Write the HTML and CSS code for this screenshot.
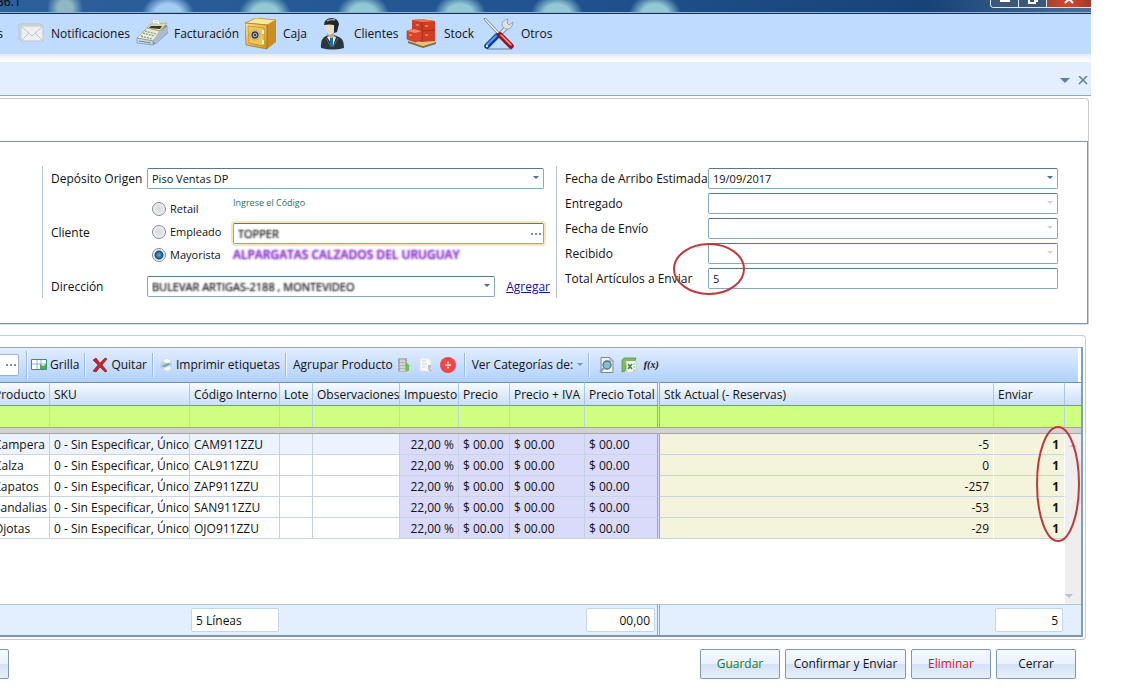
FILE: index.html
```html
<!DOCTYPE html>
<html lang="es">
<head>
<meta charset="utf-8">
<title>Envío de artículos</title>
<link rel="stylesheet" href="styles.css">
</head>
<body>
<div class="app">
  <header class="titlebar">
    <span class="title">36.1</span>
    <div class="window-buttons">
      <button class="win" aria-label="Minimizar"><svg width="12" height="4"><path d="M1 0h10v2H1z" fill="#fff"/></svg></button>
      <button class="win" aria-label="Restaurar"><svg width="12" height="4"><path d="M2 0v3h6V0M8 1h2V0" fill="none" stroke="#fff" stroke-width="2"/></svg></button>
      <button class="win win-close" aria-label="Cerrar ventana"><svg width="12" height="4"><path d="M2 3l3-3h2l3 3" fill="none" stroke="#fff" stroke-width="2"/></svg></button>
    </div>
  </header>

  <nav class="menubar">
    <a class="menu-item first" href="#">s</a>
    <a class="menu-item" href="#"><svg width="32" height="32" viewBox="0 0 32 32"><path d="M6 6h22v15H6z" fill="#d5dce3" stroke="#b8c2cc"/><path d="M8 8h22v15H8z" fill="#eef0f2" stroke="#c2c8ce"/><path d="M8 8l11 10L30 8M8 23l8-8M30 23l-8-8" fill="none" stroke="#bcc3ca"/></svg><span>Notificaciones</span></a>
    <a class="menu-item" href="#"><svg width="32" height="32" viewBox="0 0 32 32"><path d="M1 21L12 9l8-1 11-1 1 8-12 11-5 1z" fill="#7e92a4"/><path d="M1 20l10-10 13 3-7 10z" fill="#eeebdc" stroke="#9a9a8d" stroke-width=".6"/><path d="M17 23l7-10 8-5v6L20 26z" fill="#a9bccb"/><path d="M1 20l16 3v4L1 25z" fill="#c7d9e6" stroke="#6f8799" stroke-width=".6"/><path d="M11 10l4-4 16-1-7 8z" fill="#e3dba6" stroke="#999574" stroke-width=".6"/><path d="M15 8l11 0-2 3-11-1z" fill="#353b2a"/><path d="M16 1l7 1 1 5-7-1z" fill="#fff" stroke="#adb8c4" stroke-width=".6"/><path d="M18 3l4 1M18 5l4 1" stroke="#abb3bd" stroke-width=".7"/><path d="M9 13l11 3M7 15l11 3M5 18l11 3" stroke="#8c9d79" stroke-width="1.3" stroke-dasharray="2 1"/><path d="M3 23l12 2" stroke="#728a9c"/></svg><span>Facturación</span></a>
    <a class="menu-item" href="#"><svg width="32" height="32" viewBox="0 0 32 32"><defs><linearGradient id="gold" x2="1" y2="1"><stop stop-color="#ffe28a"/><stop offset="1" stop-color="#cf9224"/></linearGradient></defs><path d="M0 5l11-5 20 2-9 5z" fill="#ffe69a" stroke="#b4832b" stroke-width=".7"/><path d="M22 7l9-5v22l-9 7z" fill="#c98d22"/><path d="M0 5l22 2v24L1 27z" fill="url(#gold)" stroke="#94640d" stroke-width=".6"/><path d="M3 8l16 2v18L4 25z" fill="#f1c654" stroke="#b98a2c" stroke-width=".7"/><circle cx="10" cy="17" r="5" fill="#e9e2c8" stroke="#a5905c" stroke-width=".7"/><circle cx="10" cy="17" r="3" fill="#9faab0" stroke="#33383b" stroke-width="1.3"/><circle cx="10" cy="17" r="1" fill="#222"/><path d="M18 12v4M18 22v4" stroke="#fff4bd" stroke-width="2"/></svg><span>Caja</span></a>
    <a class="menu-item" href="#"><svg width="32" height="32" viewBox="0 0 32 32"><path d="M5 30q-1-9 5-12l5-2 8 3q5 2 5 11-11 3-23 0z" fill="#2b353e"/><path d="M11 19l4-2 5 2-3 9z" fill="#e8eef2"/><path d="M14 20l2-1 1 1v7l-1 3-2-4z" fill="#1873a2"/><path d="M11 13l7 1v5l-3 1-4-3z" fill="#bfa78d"/><path d="M9 5q5-3 9 0v9q-3 4-6 2-3-3-3-11z" fill="#e7dcc8"/><path d="M8 7Q8 1 15 0q7 0 8 6l-2 8-3 1V7q-5-1-10 0z" fill="#1f262c"/><path d="M11 3q4-2 8-1" stroke="#9eabb5" stroke-width="1.4" fill="none"/><path d="M10 20l5 9M22 20l-5 9" stroke="#677b89" stroke-width=".7"/></svg><span>Clientes</span></a>
    <a class="menu-item" href="#"><svg width="32" height="32" viewBox="0 0 32 32"><path d="M2 23l15 5 13-4v2l-13 4-15-5z" fill="#8b6a30"/><path d="M2 22l15-3 13 4-13 5z" fill="#e3c37c"/><path d="M6 2l9-1 14 2v20l-13 1-10-2z" fill="#cf3d24"/><path d="M6 2l9-1 14 2-13 1z" fill="#f07952"/><path d="M16 4v19M16 13l13-1M6 12l10 1" stroke="#962a1b" stroke-width=".8" fill="none"/><path d="M1 13l7-2 8 2v9l-7 2-8-3z" fill="#da4526" stroke="#9d3422" stroke-width=".6"/><path d="M1 13l7-2 8 2-7 2z" fill="#f38a60"/><path d="M10 7h3M19 8h3M19 17h3M3 17h3" stroke="#f7b18c"/></svg><span>Stock</span></a>
    <a class="menu-item" href="#"><svg width="32" height="32" viewBox="0 0 32 32"><path d="M4 31h25" stroke="#899db4" stroke-width="1.5"/><path d="M2 1l15 16" stroke="#77828d" stroke-width="2.6" stroke-linecap="round"/><path d="M2 1l15 16" stroke="#f5f6f7" stroke-width="1.3"/><path d="M17 16l7-7" stroke="#707982" stroke-width="4"/><path d="M17 16l7-7" stroke="#e0e3e5" stroke-width="2.6"/><path d="M25 1q-6 1-6 6 2 5 7 4 4-2 4-7l-4 3-2-2z" fill="#dce1e5" stroke="#838d96" stroke-width=".7"/><path d="M4 28l10-10" stroke="#123d91" stroke-width="5.5" stroke-linecap="round"/><path d="M4 27l9-9" stroke="#539bec" stroke-width="2" stroke-linecap="round"/><path d="M17 17l11 11" stroke="#99121d" stroke-width="5.5" stroke-linecap="round"/><path d="M18 17l10 10" stroke="#f29497" stroke-width="1.6" stroke-linecap="round"/><circle cx="4" cy="28" r="1.2" fill="#d6e8fb"/></svg><span>Otros</span></a>
  </nav>
  <div class="ribbon-edge"></div>
  <div class="tabstrip">
    <button class="plain" aria-label="Lista de pestañas"><svg width="10" height="6"><path d="M0 0h10L5 5z" fill="#5d7fa6"/></svg></button>
    <button class="plain" aria-label="Cerrar pestaña"><svg width="10" height="9"><path d="M1 0l8 8M9 0L1 8" stroke="#6482a3" stroke-width="1.6"/></svg></button>
  </div>

  <main>
    <section class="document">
      <form class="form">
        <div class="group origin">
          <label for="deposito">Depósito Origen</label>
          <div class="combo"><select id="deposito"><option>Piso Ventas DP</option></select></div>

          <span id="cliente-label">Cliente</span>
          <div class="client">
            <div class="radios" role="radiogroup" aria-labelledby="cliente-label">
              <label><input type="radio" name="tipo">Retail</label>
              <label><input type="radio" name="tipo">Empleado</label>
              <label><input type="radio" name="tipo" checked>Mayorista</label>
            </div>
            <div class="code">
              <label class="hint" for="codigo">Ingrese el Código</label>
              <div class="code-box"><input id="codigo" class="masked" value="TOPPER"><button type="button" class="dots" aria-label="Buscar cliente"><i></i><i></i><i></i></button></div>
              <output class="client-name">ALPARGATAS CALZADOS DEL URUGUAY</output>
            </div>
          </div>

          <label for="direccion">Dirección</label>
          <div class="address"><div class="combo"><select id="direccion" class="masked"><option>BULEVAR ARTIGAS-2188 , MONTEVIDEO</option></select></div><a href="#">Agregar</a></div>
        </div>

        <div class="group shipping">
          <label for="arribo">Fecha de Arribo Estimada</label>
          <div class="combo"><select id="arribo"><option>19/09/2017</option></select></div>
          <label for="entregado">Entregado</label>
          <div class="combo off"><select id="entregado" disabled><option></option></select></div>
          <label for="envio">Fecha de Envío</label>
          <div class="combo off"><select id="envio" disabled><option></option></select></div>
          <label for="recibido">Recibido</label>
          <div class="combo off"><select id="recibido" disabled><option></option></select></div>
          <label for="total">Total Artículos a Enviar</label>
          <input id="total" class="field" value="5">
          <svg class="mark mark-total" width="74" height="54"><ellipse cx="37" cy="27" rx="35" ry="25"/></svg>
        </div>
      </form>
    </section>

    <section class="items">
      <div class="grid">
        <div class="toolbar">
          <div class="search"><button class="dots" aria-label="Buscar producto"><i></i><i></i><i></i></button></div>
          <span class="sep tall"></span>
          <button class="tool grilla"><svg width="16" height="12"><path d="M.5.5h15v10H.5z" fill="#fff" stroke="#25958a"/><path d="M1 5h14M6 1v9M10 1v9" stroke="#8fb6de"/><path d="M9 5l3 2 3-2v5H9z" fill="#5ea944"/></svg>Grilla</button>
          <span class="sep"></span>
          <button class="tool quitar"><svg width="16" height="16"><path d="M1 3l3-2 4 5 5-5 2 1-5 6 5 6-2 1-5-5-4 5-3-1 5-6z" fill="#c9242b" stroke="#7d1118" stroke-width=".6"/></svg>Quitar</button>
          <span class="sep"></span>
          <button class="tool imprimir"><svg width="12" height="14"><path d="M0 6l3-3h6l3 3v5l-4 2-8-3z" fill="#c5d0db"/><path d="M3 4l3-4 5 2-2 4z" fill="#fff" stroke="#c1ccd7" stroke-width=".5"/><path d="M1 8l7-3 3 1-6 3z" fill="#6ba6d4"/><path d="M3 11l6-3 3 2-4 3z" fill="#f5f6f8"/></svg>Imprimir etiquetas</button>
          <span class="sep"></span>
          <button class="tool agrupar">Agrupar Producto</button>
          <button class="tool icon" aria-label="Expandir"><svg width="16" height="16"><path d="M2 1h9v14H2z" fill="#b4b7b9"/><path d="M3 2v12M10 2v12" stroke="#8f9496" stroke-dasharray="2 1"/><path d="M4 4h5M4 7h5M4 10h5M4 13h5" stroke="#edf0f1"/><path d="M11 6l3 3h-1v5h-3V9H9z" fill="#6dc53d"/></svg></button>
          <button class="tool icon" aria-label="Nota"><svg width="16" height="16"><path d="M2 1h8l3 3v10H2z" fill="#f7f8f8" stroke="#dbe0e5" stroke-width=".7"/><path d="M4 4h4M4 7h5M4 10h4" stroke="#d3d7da"/><path d="M10 8h3v3h-1l2 3-2 1-2-3z" fill="#b9c2c7"/></svg></button>
          <button class="tool icon" aria-label="Dividir"><svg width="16" height="16"><circle cx="8" cy="8" r="8" fill="#f24546"/><path d="M5 8h6" stroke="#fff" stroke-width="1.3"/><circle cx="8" cy="5.5" r="1" fill="#fff"/><circle cx="8" cy="10.5" r="1" fill="#fff"/></svg></button>
          <span class="sep"></span>
          <button class="tool categorias">Ver Categorías de:<svg width="6" height="4"><path d="M0 0h6L3 3z" fill="#7393b9"/></svg></button>
          <span class="sep"></span>
          <button class="tool icon" aria-label="Vista previa"><svg width="16" height="16"><path d="M2 .5h9l3 3v12H2z" fill="#f0f3f5" stroke="#7d8992"/><path d="M11 1v3h3" fill="none" stroke="#8b969e"/><circle cx="8" cy="8" r="4" fill="#83bfd2" stroke="#526f7c" stroke-width="1.3"/><path d="M5 11l-4 4" stroke="#7b9fc0" stroke-width="2"/></svg></button>
          <button class="tool icon" aria-label="Exportar a Excel"><svg width="16" height="16"><path d="M3 1h12l-1 3H6L4 14l-3 1V3z" fill="#7fbd5f" stroke="#4f8f3d" stroke-width=".7"/><path d="M5 4h10v10l-9 2z" fill="#fff" stroke="#a7c39e" stroke-width=".6"/><path d="M7 7l4 5M11 7l-4 5" stroke="#438e3b" stroke-width="1.8"/><path d="M13 6v8" stroke="#75b66a" stroke-dasharray="2 1"/></svg></button>
          <button class="tool icon fx" aria-label="Fórmula">f(x)</button>
        </div>

        <table>
          <colgroup><col class="c-prod"><col class="c-sku"><col class="c-cod"><col class="c-lote"><col class="c-obs"><col class="c-imp"><col class="c-pre"><col class="c-iva"><col class="c-tot"><col><col class="c-env"><col class="c-scr"></colgroup>
          <thead>
            <tr class="head"><th>Producto</th><th>SKU</th><th>Código Interno</th><th>Lote</th><th>Observaciones</th><th>Impuesto</th><th>Precio</th><th>Precio + IVA</th><th>Precio Total</th><th>Stk Actual (- Reservas)</th><th>Enviar</th><th></th></tr>
            <tr class="filter"><td></td><td></td><td></td><td></td><td></td><td></td><td></td><td></td><td></td><td></td><td></td><td></td></tr>
            <tr class="split"><td colspan="12"></td></tr>
          </thead>
          <tbody>
            <tr class="row current"><td>Campera</td><td>0 - Sin Especificar, Único</td><td>CAM911ZZU</td><td></td><td></td><td>22,00 %</td><td>$ 00.00</td><td>$ 00.00</td><td>$ 00.00</td><td>-5</td><td>1</td><td class="bar"><svg width="8" height="5"><path d="M0 5l4-4 4 4z" fill="#c5c8cf"/></svg></td></tr>
            <tr class="row"><td>Calza</td><td>0 - Sin Especificar, Único</td><td>CAL911ZZU</td><td></td><td></td><td>22,00 %</td><td>$ 00.00</td><td>$ 00.00</td><td>$ 00.00</td><td>0</td><td>1</td><td class="bar"></td></tr>
            <tr class="row"><td>Zapatos</td><td>0 - Sin Especificar, Único</td><td>ZAP911ZZU</td><td></td><td></td><td>22,00 %</td><td>$ 00.00</td><td>$ 00.00</td><td>$ 00.00</td><td>-257</td><td>1</td><td class="bar"></td></tr>
            <tr class="row"><td>Sandalias</td><td>0 - Sin Especificar, Único</td><td>SAN911ZZU</td><td></td><td></td><td>22,00 %</td><td>$ 00.00</td><td>$ 00.00</td><td>$ 00.00</td><td>-53</td><td>1</td><td class="bar"></td></tr>
            <tr class="row"><td>Ojotas</td><td>0 - Sin Especificar, Único</td><td>OJO911ZZU</td><td></td><td></td><td>22,00 %</td><td>$ 00.00</td><td>$ 00.00</td><td>$ 00.00</td><td>-29</td><td>1</td><td class="bar"></td></tr>
            <tr class="rest"><td colspan="11"></td><td class="bar"><svg width="8" height="5"><path d="M0 0h8L4 4z" fill="#bcc0c8"/></svg></td></tr>
          </tbody>
          <tfoot>
            <tr><td></td><td></td><td><output class="sum">5 Líneas</output></td><td></td><td></td><td></td><td></td><td></td><td class="pair"><output class="sum right">00,00</output></td><td></td><td><output class="sum right">5</output></td><td></td></tr>
          </tfoot>
        </table>
        <svg class="mark mark-send" width="46" height="118"><ellipse cx="23" cy="59" rx="21" ry="57"/></svg>
      </div>
    </section>

    <div class="actions">
      <button class="btn cut" aria-label="Anterior"></button>
      <button class="btn save">Guardar</button>
      <button class="btn confirm">Confirmar y Enviar</button>
      <button class="btn delete">Eliminar</button>
      <button class="btn">Cerrar</button>
    </div>
  </main>
</div>
</body>
</html>
```
FILE: styles.css
```css
* { box-sizing: border-box; }

body {
  margin: 0;
  background: #fff;
  color: #111;
  font: 12px/16px "Open Sans", "Noto Sans", sans-serif;
}

button, input, select { font: inherit; color: inherit; margin: 0; }
button { padding: 0; }
svg { display: block; flex: none; }

.app { margin-right: 40px; overflow: hidden; }

/* Window frame */
.titlebar {
  display: flex;
  justify-content: space-between;
  height: 14px;
  overflow: hidden;
  border-bottom: 1px solid #14304f;
  box-shadow: inset 0 -1px #8fb3d6;
  background:
    radial-gradient(ellipse 18px 18px at 65px 8px, #8fb8c4 40%, transparent),
    radial-gradient(ellipse 26px 20px at 168px 14px, #a3cdf0 50%, transparent),
    radial-gradient(ellipse 26px 20px at 265px 14px, #93c8d4 50%, transparent),
    radial-gradient(ellipse 26px 20px at 363px 14px, #93c8d4 50%, transparent),
    radial-gradient(ellipse 26px 20px at 460px 14px, #93c8d4 50%, transparent),
    radial-gradient(ellipse 26px 20px at 557px 14px, #93c8d4 50%, transparent),
    radial-gradient(ellipse 26px 20px at 655px 14px, #93c8d4 50%, transparent),
    linear-gradient(90deg, #2d619c, #1f5491 50%, #184377 85%, #4a6f97);
}
.title { margin-left: -3px; line-height: 4px; color: #000; }
.window-buttons {
  display: flex;
  height: 8px;
  border: 1px solid #dbe7f2;
  border-width: 0 0 1px 1px;
  border-radius: 0 0 0 4px;
  overflow: hidden;
}
.win {
  display: flex;
  justify-content: center;
  width: 28px;
  border: 0;
  border-right: 1px solid #dbe7f2;
  background: #3d5778;
}
.win-close { width: 44px; border-right: 0; background: linear-gradient(90deg, #a8412c, #d8452a, #9c3a26); }

.menubar {
  display: grid;
  grid-template-columns: 3px 113px 99px 61px 80px 67px 80px;
  gap: 10px;
  align-items: center;
  height: 40px;
  background: #bfdbff;
}
.menu-item { display: flex; align-items: center; gap: 6px; color: #111; text-decoration: none; white-space: nowrap; }
.menu-item.first { justify-content: flex-end; }
.ribbon-edge { height: 8px; background: linear-gradient(#e6eaf0, #fff); }
.tabstrip {
  display: flex;
  align-items: center;
  justify-content: flex-end;
  gap: 8px;
  height: 34px;
  padding: 4px 3px 0 0;
  border-bottom: 1px solid #8ba9c6;
  background: #e3efff;
}
.plain { border: 0; background: none; }

/* Form */
.document {
  margin: 2px 2px 0 0;
  padding-top: 42px;
  border: 1px solid #c9cdd1;
  border-width: 1px 1px 0 0;
  border-radius: 0 4px 0 0;
}
.form {
  display: flex;
  align-items: flex-start;
  padding: 24px 29px 25px 42px;
  border: 1px solid #7f97a9;
  border-left: 0;
  box-shadow: 0 1px #d9e0e6;
}
.group { display: grid; align-items: center; padding: 2px 0 0 8px; border-left: 1px solid #b5c5d2; white-space: nowrap; }
.origin { flex: none; grid-template: 21px 87px 21px / 96px 397px; width: 514px; height: 132px; }
.shipping {
  position: relative;
  flex: 1;
  grid-template-columns: 143px 1fr;
  grid-auto-rows: 21px;
  row-gap: 4px;
  height: 132px;
}
.combo, .code-box, .field {
  border: 1px solid #86a9bd;
  border-top-color: #58788d;
  border-radius: 2px;
  background: #fff;
}
.combo { position: relative; flex: 1; height: 21px; }
.combo::after {
  content: "";
  position: absolute;
  top: 7px;
  right: 4px;
  border: 3px solid transparent;
  border-top-color: #41719c;
  border-bottom: 0;
}
.combo.off::after { border-top-color: #cdd7df; }
.combo select {
  display: block;
  width: 100%;
  height: 19px;
  padding: 0 16px 0 4px;
  border: 0;
  background: none;
  appearance: none;
  font-size: 11px;
}
.field { width: 100%; height: 21px; padding: 0 4px; font-size: 11px; }

.client { display: flex; justify-content: space-between; height: 71px; }
.radios { display: grid; grid-auto-rows: 23px; margin-left: 5px; align-content: start; }
.radios label { display: flex; align-items: center; gap: 4px; font-size: 11px; }
.radios input {
  width: 14px;
  height: 14px;
  border: 1px solid #858b91;
  border-radius: 50%;
  appearance: none;
  background: radial-gradient(#d4d7db, #e9ebed 60%, #f8f8f8);
}
.radios input:checked { background: radial-gradient(circle at 50% 50%, #63b4df, #144e78 4px, #f1f4f6 5px); }
.code { display: flex; flex-direction: column; width: 311px; }
.hint { color: #1c7267; font-size: 9px; line-height: 12px; }
.code-box {
  display: flex;
  flex: none;
  align-items: center;
  height: 21px;
  margin-top: 14px;
  box-shadow: 0 0 0 2px #f5e9b8;
}
.code-box input { flex: 1; width: 0; border: 0; outline: 0; padding: 0 4px; background: none; font-size: 11px; }
.dots { display: flex; gap: 2px; padding: 0 2px; border: 0; background: none; }
.dots i { width: 2px; height: 2px; background: #7592ad; }
.masked { color: transparent; text-shadow: 0 0 2px #333, 0 0 2px #777; }
.client-name {
  margin-top: 3px;
  color: transparent;
  text-shadow: 0 0 2px #8a35cc, 0 0 3px #b98ae0;
  font-weight: 600;
}
.address { display: flex; align-items: center; gap: 11px; margin-right: -6px; }
.address a { color: #1414a0; }

/* Items grid */
.items {
  margin: 11px 5px 0 0;
  padding: 11px 2px 2px 0;
  border: 1px solid #c3ced5;
  border-left: 0;
  border-radius: 0 4px 4px 0;
}
.grid {
  position: relative;
  margin-left: -10px;
  border-top: 1px solid #9aa9b5;
  border-right: 2px solid #7f9dbd;
  border-bottom: 2px solid #7f93ae;
}
.toolbar {
  display: flex;
  align-items: center;
  height: 34px;
  margin-right: 3px;
  background: linear-gradient(#e1edff, #c5dcff 60%, #afd0fc);
}
.search {
  display: flex;
  align-items: center;
  justify-content: flex-end;
  width: 29px;
  height: 22px;
  border: 1px solid #9cb6ce;
  border-radius: 2px;
  background: #fff;
}
.sep { width: 2px; height: 24px; margin: 0 6px 0 5px; border-left: 1px solid #9abbdd; border-right: 1px solid #f0f6ff; }
.sep.tall { height: 28px; margin: 0 3px 0 7px; }
.tool { display: flex; align-items: center; gap: 3px; border: 0; background: none; white-space: nowrap; }
.tool.icon { width: 22px; justify-content: center; }
.imprimir, .categorias { gap: 4px; }
.tool.fx { font: italic bold 10px/16px "Liberation Serif", serif; }

table { width: 100%; table-layout: fixed; border-collapse: separate; border-spacing: 0; }
.c-prod { width: 60px; }
.c-sku { width: 140px; }
.c-cod { width: 90px; }
.c-lote { width: 33px; }
.c-obs { width: 87px; }
.c-imp { width: 59px; }
.c-pre { width: 51px; }
.c-iva { width: 75px; }
.c-tot { width: 75px; }
.c-env { width: 71px; }
.c-scr { width: 16px; }
th, td { padding: 2px 4px 0; text-align: left; font-weight: 400; white-space: nowrap; border-right: 1px solid #c2d3e0; }
tr > :last-child { border-right: 0; }
.head th {
  height: 24px;
  border-top: 1px solid #6990bd;
  border-bottom: 1px solid #6c94bd;
  border-right-color: #a9c8e4;
  background: linear-gradient(#f7fbff, #dbe9fc 60%, #cbdff9);
}
.filter td { height: 21px; background: #ceff80; }
.split td { height: 7px; padding: 0; border: 1px solid #a3a3a3; border-width: 1px 0; background: #d2d2d2; }
.row td { height: 21px; border-bottom: 1px solid #c5d5e2; }
.row.current td { background: #ecf3ff; }
.row td:nth-child(n+6) { background: #dadafa; }
.row.current td:nth-child(n+6) { background: #dadafa; }
.row td:nth-child(n+10), .row.current td:nth-child(n+10) { background: #f4f4dc; border-right-color: #fff; text-align: right; }
.row td:nth-child(6) { text-align: right; }
.row td:nth-child(11) { font-weight: 700; padding-right: 5px; }
.head th:nth-child(9), .filter td:nth-child(9), .row td:nth-child(9), tfoot td.pair { border-right: 3px double #86aad0; }
.row td.bar.bar.bar, td.bar { padding: 0 4px; border: 0; background: #eee; }
.rest td { height: 65px; padding: 0; border: 0; vertical-align: bottom; }
.rest td.bar { padding-bottom: 5px; }
tfoot td { height: 31px; padding: 0 1px; border: 0; border-top: 1px solid #a9c6e0; background: #e3efff; }
.sum { display: block; height: 24px; padding: 0 4px; border: 1px solid #c4d6ea; border-radius: 2px; background: #fff; line-height: 23px; }
.sum.right { text-align: right; margin-right: 1px; }

.mark { position: absolute; fill: none; stroke: #c3373a; stroke-width: 2; pointer-events: none; }
.mark-total { left: 115px; top: 76px; }
.mark-send { right: 0; top: 77px; }

/* Actions */
.actions { display: flex; gap: 5px; padding: 9px 15px 16px 0; }
.btn {
  width: 80px;
  height: 30px;
  border: 1px solid #7f99b3;
  border-radius: 2px;
  background: linear-gradient(#f6faff, #e9f1fd 50%, #d4e1f6 51%, #e6effc);
}
.btn.cut { width: 20px; margin: 0 auto 0 -11px; }
.btn.save { color: #167a1c; }
.btn.confirm { width: 121px; }
.btn.delete { color: #e0101c; }
```
